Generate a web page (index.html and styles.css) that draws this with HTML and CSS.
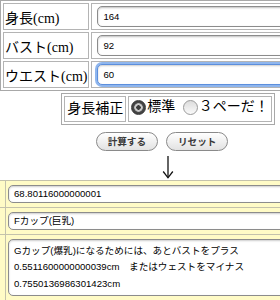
FILE: index.html
```html
<!DOCTYPE html>
<html lang="ja">
<head>
    <meta charset="UTF-8" />
    <meta name="viewport" content="width=device-width, initial-scale=1.0" />
    <title>カップ計算</title>
    <link rel="stylesheet" href="styles.css">
</head>
<body>
    <div class="page">
        <table class="form-table">
            <tr>
                <th>身長(cm)</th>
                <td><input class="field" type="text" value="164" /></td>
            </tr>
            <tr>
                <th>バスト(cm)</th>
                <td><input class="field" type="text" value="92" /></td>
            </tr>
            <tr>
                <th>ウエスト(cm)</th>
                <td><input class="field field--focus" type="text" value="60" /></td>
            </tr>
        </table>

        <table class="option-table">
            <tr>
                <th>身長補正</th>
                <td>
                    <label class="option"><span class="radio radio--on"></span>標準</label>
                    <label class="option"><span class="radio"></span>３ペーだ！</label>
                </td>
            </tr>
        </table>

        <div class="actions">
            <button class="pill-button">計算する</button>
            <button class="pill-button">リセット</button>
        </div>

        <div class="arrow">
            <svg width="14" height="24" viewBox="0 0 14 24" fill="none" stroke="#111" stroke-width="1.3">
                <path d="M7 1V22.5" />
                <path d="M2.2 16.5L7 22.8L11.8 16.5" />
            </svg>
        </div>

        <table class="result-table">
            <tr>
                <th></th>
                <td><div class="result">68.80116000000001</div></td>
            </tr>
            <tr>
                <th></th>
                <td><div class="result">Fカップ(巨乳)</div></td>
            </tr>
            <tr>
                <th></th>
                <td>
                    <div class="result result--multi">Gカップ(爆乳)になるためには、あとバストをプラス<br>0.5511600000000039cm　またはウェストをマイナス<br>0.7550136986301423cm</div>
                </td>
            </tr>
        </table>
    </div>
</body>
</html>
```

FILE: styles.css
```css
/* General styles */
html {
  overflow: hidden;
}

body {
  margin: 0;
  background: #fff;
  color: #000;
  font-family: "Liberation Serif", "Noto Sans CJK JP", serif;
}

.page {
  width: 336px;
}

/* Input table */
.form-table {
  width: 100%;
  border: 1px solid #a8a8a8;
  border-spacing: 2px;
}

.form-table th,
.form-table td {
  border: 1px solid #b4b4b4;
}

.form-table th {
  width: 1%;
  padding: 0 1px;
  font-size: 14px;
  font-weight: normal;
  text-align: left;
  white-space: nowrap;
}

.form-table td {
  padding: 2px 5px;
}

.field {
  display: block;
  box-sizing: border-box;
  width: 100%;
  height: 21px;
  margin: 0;
  padding: 0 5px;
  border: 1px solid #8c8c8c;
  border-radius: 5px;
  outline: 0;
  background: #fff;
  box-shadow: inset 0 1px 2px rgba(0, 0, 0, 0.25);
  font-family: "Liberation Sans", "Noto Sans CJK JP", sans-serif;
  font-size: 9.6px;
  color: #000;
}

.field--focus {
  border-color: #5d8fdc;
  box-shadow: 0 0 0 2px #8fb6ee, inset 0 1px 2px rgba(0, 0, 0, 0.2);
}

/* Option table */
.option-table {
  margin: 2px auto 0;
  border: 1px solid #a8a8a8;
  border-spacing: 2px;
  font-size: 14px;
  line-height: 20px;
}

.option-table th,
.option-table td {
  border: 1px solid #b4b4b4;
  padding: 0 2px;
  font-weight: normal;
  white-space: nowrap;
}

.option {
  display: inline-flex;
  align-items: center;
}

.option + .option {
  margin-left: 4px;
}

.radio {
  display: inline-block;
  box-sizing: border-box;
  width: 15px;
  height: 15px;
  margin-right: 1px;
  border: 1px solid #9a9a9a;
  border-radius: 50%;
  background: linear-gradient(#dcdcdc, #fafafa);
}

.radio--on {
  border-color: #3a3a3a;
  background: radial-gradient(circle, #3c3c3c 0, #3c3c3c 2px, #d8d8d8 2.5px, #b8b8b8 4px, #4a4a4a 4.6px, #2e2e2e 100%);
}

/* Buttons */
.actions {
  display: flex;
  justify-content: center;
  gap: 8px;
  margin-top: 7px;
  padding-right: 12px;
}

.pill-button {
  height: 19px;
  margin: 0;
  padding: 0 11px;
  border: 1px solid #8a8a8a;
  border-radius: 10px;
  background: linear-gradient(#ffffff, #e2e2e2);
  color: #3a3a3a;
  font-family: "Liberation Sans", "Noto Sans CJK JP", sans-serif;
  font-size: 9.6px;
  font-weight: bold;
  line-height: 17px;
}

.arrow {
  display: flex;
  justify-content: center;
  margin-top: 4px;
}

.arrow svg {
  display: block;
}

/* Result table */
.result-table {
  width: 100%;
  margin-top: 1px;
  border-collapse: collapse;
  background: #fffbc6;
}

.result-table th,
.result-table td {
  border: 1px solid #c4c2ac;
  padding: 4px 2px;
}

.result-table th {
  width: 3px;
  border-left: 0;
  padding: 0 1px;
}

.result {
  padding: 0 5px;
  border: 1px solid #8c8c8c;
  border-radius: 5px;
  background: #fff;
  box-shadow: inset 0 1px 2px rgba(0, 0, 0, 0.2);
  font-family: "Liberation Sans", "Noto Sans CJK JP", sans-serif;
  font-size: 9.6px;
  line-height: 16px;
  white-space: nowrap;
}

.result--multi {
  padding: 3px 5px;
  line-height: 16.5px;
}
```
